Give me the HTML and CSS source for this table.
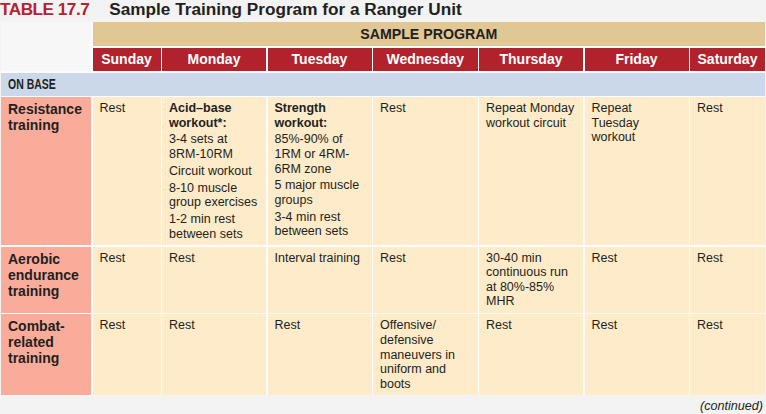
FILE: index.html
```html
<!DOCTYPE html>
<html lang="en">
<head>
<meta charset="utf-8">
<title>Table 17.7</title>
<link rel="stylesheet" href="styles.css">
</head>
<body>
<div class="page">
  <div class="title"><span class="tnum">TABLE 17.7</span><span class="tname">Sample Training Program for a Ranger Unit</span></div>
  <div class="table">
    <div class="corner"></div>
    <div class="program">SAMPLE PROGRAM</div>
    <div class="day">Sunday</div>
    <div class="day">Monday</div>
    <div class="day">Tuesday</div>
    <div class="day">Wednesday</div>
    <div class="day">Thursday</div>
    <div class="day">Friday</div>
    <div class="day">Saturday</div>

    <div class="section"><span class="section-label">ON BASE</span></div>

    <div class="rowhead">Resistance training</div>
    <div class="cell"><p>Rest</p></div>
    <div class="cell"><p class="b">Acid–base workout*:</p><p>3-4 sets at 8RM-10RM</p><p>Circuit workout</p><p>8-10 muscle group exercises</p><p>1-2 min rest between sets</p></div>
    <div class="cell"><p class="b">Strength workout:</p><p>85%-90% of 1RM or 4RM-6RM zone</p><p>5 major muscle groups</p><p>3-4 min rest between sets</p></div>
    <div class="cell"><p>Rest</p></div>
    <div class="cell"><p>Repeat Monday workout circuit</p></div>
    <div class="cell"><p>Repeat Tuesday workout</p></div>
    <div class="cell"><p>Rest</p></div>

    <div class="rowhead">Aerobic endurance training</div>
    <div class="cell"><p>Rest</p></div>
    <div class="cell"><p>Rest</p></div>
    <div class="cell"><p>Interval training</p></div>
    <div class="cell"><p>Rest</p></div>
    <div class="cell"><p>30-40 min continuous run at 80%-85% MHR</p></div>
    <div class="cell"><p>Rest</p></div>
    <div class="cell"><p>Rest</p></div>

    <div class="rowhead">Combat-related training</div>
    <div class="cell"><p>Rest</p></div>
    <div class="cell"><p>Rest</p></div>
    <div class="cell"><p>Rest</p></div>
    <div class="cell"><p>Offensive/<wbr>defensive maneuvers in uniform and boots</p></div>
    <div class="cell"><p>Rest</p></div>
    <div class="cell"><p>Rest</p></div>
    <div class="cell"><p>Rest</p></div>
  </div>
  <div class="continued">(continued)</div>
</div>
</body>
</html>
```

FILE: styles.css
```css
html, body {
  margin: 0;
  padding: 0;
  background: #f3f3f3;
}
body {
  width: 766px;
  height: 414px;
  overflow: hidden;
  font-family: "Liberation Sans", Arial, sans-serif;
  color: #231f20;
}
.title {
  font-size: 17.2px;
  font-weight: bold;
  line-height: 19px;
  height: 19px;
  padding-bottom: 3px;
  white-space: nowrap;
}
.tnum {
  color: #b52230;
  letter-spacing: -0.5px;
  margin-right: 20px;
}
.tname {
  color: #231f20;
}
.table {
  margin-left: 1px;
  width: 763.5px;
  display: grid;
  grid-template-columns: 90px 68px 104px 104px 104.5px 104px 104px 75px;
  grid-template-rows: 24px 23.5px 23px auto auto auto;
  gap: 1.5px;
  background: #fcfcfc;
}
.corner {
  grid-row: 1 / span 2;
  grid-column: 1;
  background: #f7f7f7;
}
.program {
  grid-column: 2 / span 7;
  background: #e1c794;
  font-size: 14.2px;
  font-weight: bold;
  display: flex;
  align-items: center;
  justify-content: center;
  color: #231f20;
}
.day {
  background: #b1222d;
  color: #ffffff;
  font-size: 14px;
  font-weight: bold;
  display: flex;
  align-items: center;
  justify-content: center;
}
.section {
  grid-column: 1 / span 8;
  background: #cbd8e9;
  display: flex;
  align-items: center;
  padding-left: 7px;
}
.section-label {
  display: inline-block;
  font-size: 14px;
  font-weight: bold;
  transform: scaleX(0.75);
  transform-origin: left center;
  color: #231f20;
}
.rowhead {
  background: #f9ac9a;
  font-size: 14px;
  font-weight: bold;
  line-height: 16px;
  padding: 4px 7px;
}
.cell {
  background: #fdebca;
  font-size: 12.5px;
  line-height: 14.6px;
  padding: 4px 6px 4px 7px;
}
.cell p {
  margin: 0 0 2.2px 0;
}
.cell p:last-child {
  margin-bottom: 0;
}
.cell p.b {
  font-weight: bold;
}
.continued {
  font-size: 12.6px;
  font-style: italic;
  text-align: right;
  line-height: 15px;
  padding-top: 4px;
  padding-right: 3px;
}
```
